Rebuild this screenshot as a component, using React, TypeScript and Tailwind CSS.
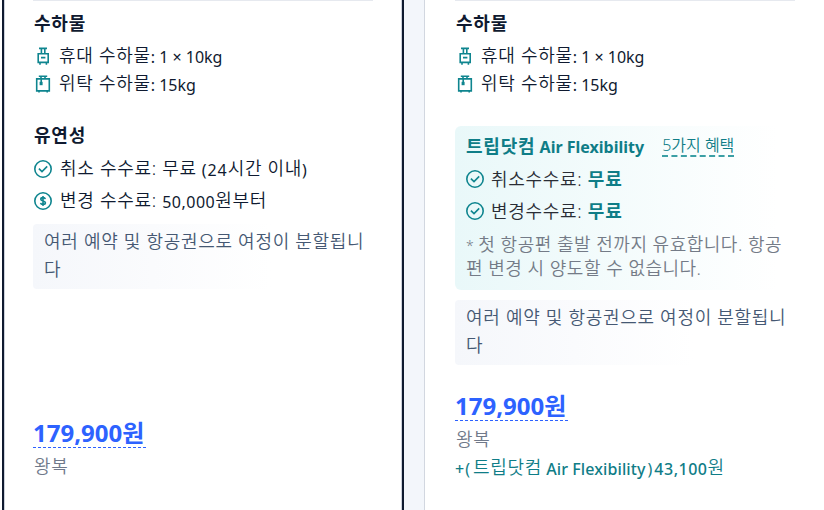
import type { ReactNode } from "react";

const K = ({ children }: { children: ReactNode }) => (
  <span className="text-[18px] font-[350] tracking-[0.7px]">{children}</span>
);

const KM = ({ children }: { children: ReactNode }) => (
  <span className="align-[1px] text-[18px] font-[350] tracking-[0.7px]">{children}</span>
);

const KB = ({ children }: { children: ReactNode }) => (
  <span className="text-[18px] font-bold tracking-[0.8px]">{children}</span>
);

function CarryOn() {
  return (
    <svg width="18" height="18" viewBox="0 0 18 18" fill="none" stroke="#0f858f" strokeWidth="1.6">
      <path d="M5 1.4h8M7.4 1v5.5M10.8 1v5.5M4.2 6.8h10v8.6h-10zM7 10.6h4.4M6 15.5v2.3M12.4 15.5v2.3" />
    </svg>
  );
}

function Checked() {
  return (
    <svg width="18" height="18" viewBox="0 0 18 18" fill="none" stroke="#0f858f" strokeWidth="1.6">
      <path d="M4.8 1.2h8.4M7 1v3M11 1v3M2.7 3.9h12.6v12H2.7zM5 16v1.6M13.2 16v1.6M7.2 4v4" />
      <path d="M5.6 6.8h3v3.4h-3z" fill="#0f858f" stroke="none" />
    </svg>
  );
}

function Check() {
  return (
    <svg width="18" height="18" viewBox="0 0 18 18" fill="none" stroke="#0f858f" strokeWidth="1.6">
      <circle cx="9" cy="9" r="8.2" />
      <path d="M4.9 8.6l3.1 3 5.2-5.2" />
    </svg>
  );
}

function Dollar() {
  return (
    <svg width="18" height="18" viewBox="0 0 18 18" fill="none" stroke="#0f858f" strokeWidth="1.6">
      <circle cx="9" cy="9" r="8.2" />
      <path d="M11.3 7.1C11.1 6.1 10.2 5.6 9 5.6c-1.3 0-2.2.6-2.2 1.6 0 2.3 4.6 1.2 4.6 3.6 0 1-.9 1.7-2.4 1.7-1.3 0-2.2-.6-2.4-1.6M9 4v10" />
    </svg>
  );
}

function Row({ icon, className, children }: { icon: ReactNode; className: string; children: ReactNode }) {
  return (
    <div className={`flex items-center whitespace-nowrap ${className}`}>
      {icon}
      <span>{children}</span>
    </div>
  );
}

function Baggage() {
  return (
    <>
      <div className="h-px bg-[#e6e9ef]" />
      <h3 className="mt-2 h-7 pl-px leading-7"><KB>수하물</KB></h3>
      <div className="mt-[5px] flex flex-col leading-7">
        <Row icon={<CarryOn />} className="h-7 gap-[7px] pl-px"><KM>휴대 수하물</KM>: 1 × 10kg</Row>
        <Row icon={<Checked />} className="h-7 gap-[7px] pl-px"><KM>위탁 수하물</KM>: 15kg</Row>
      </div>
    </>
  );
}

function SplitNotice() {
  return (
    <div className="h-[65px] rounded bg-linear-to-r from-[#f5f7fb] to-white to-70% pl-[11px] pt-1 leading-[27px] text-[#455873]">
      <K>여러 예약 및 항공권으로 여정이 분할됩니<br />다</K>
    </div>
  );
}

function Price() {
  return (
    <div className="flex h-[30px] w-[113px] items-center border-b border-dashed border-[#2d62ff] text-[24px] font-bold text-[#2d62ff]">
      179,900원
    </div>
  );
}

export default function App() {
  return (
    <div
      lang="ko"
      className="flex h-[510px] w-[824px] overflow-hidden bg-[#f3f6fb] font-['Noto_Sans','Noto_Sans_CJK_KR',sans-serif] text-[16px] text-[#0f1a30]"
    >
      <div className="w-[2px] bg-white" />
      <section className="w-[402px] border-x-2 border-[#0f1a30] bg-white">
        <div className="h-full border-x border-[#cdd2dc] px-7">
          <Baggage />
          <h3 className="mt-[23px] h-7 pl-px leading-7"><KB>유연성</KB></h3>
          <div className="mt-1 flex flex-col leading-8">
            <Row icon={<Check />} className="h-8 gap-2 pl-px"><KM>취소 수수료: 무료</KM> <span className="ml-px tracking-[0.9px]">(24</span><KM>시간 이내</KM>)</Row>
            <Row icon={<Dollar />} className="h-8 gap-2 pl-px"><KM>변경 수수료: </KM><span className="tracking-[0.5px]">50,000</span><KM>원부터</KM></Row>
          </div>
          <div className="mt-[7px]"><SplitNotice /></div>
          <div className="mt-[129px]"><Price /></div>
          <div className="mt-1 h-7 pl-px leading-7 text-[#70798a]"><K>왕복</K></div>
        </div>
      </section>
      <div className="w-5" />
      <section className="w-[400px] border-l border-[#d2d7e0] bg-white pl-[30px] pr-[29px]">
        <Baggage />
        <div className="mt-[28px] h-[164px] rounded-md bg-linear-to-r from-[#e9f8f9] to-white to-95% pl-[11px] pt-1">
          <div className="flex h-8 items-center gap-[18px] whitespace-nowrap text-[#0f7d87]">
            <span className="font-bold leading-8"><KB>트립닷컴</KB> Air Flexibility</span>
            <span className="h-[22px] border-b-2 border-dashed border-[#3c9fa5] text-[16px] font-[350] leading-5">5가지 혜택</span>
          </div>
          <div className="mt-px flex flex-col leading-8 text-[#292d35]">
            <Row icon={<Check />} className="h-8 gap-[7px]"><K>취소수수료: </K><span className="text-[#0f7d87]"><KB>무료</KB></span></Row>
            <Row icon={<Check />} className="h-8 gap-[7px]"><K>변경수수료: </K><span className="text-[#0f7d87]"><KB>무료</KB></span></Row>
          </div>
          <p className="mt-1.5 whitespace-nowrap text-[18px] font-[350] leading-[23px] tracking-[0.5px] text-[#747b87]">
            <span className="text-[14px]">* </span>첫 항공편 출발 전까지 유효합니다. 항공<br />편 변경 시 양도할 수 없습니다.
          </p>
        </div>
        <div className="mt-2.5"><SplitNotice /></div>
        <div className="mt-[26px]"><Price /></div>
        <div className="mt-1 h-7 pl-px leading-7 text-[#70798a]"><K>왕복</K></div>
        <div className="h-7 whitespace-nowrap leading-7 text-[#0f7d87]">
          <span className="font-medium">+</span><span className="ml-px mr-[3px]">(</span><KM>트립닷컴</KM> <span className="font-medium tracking-[0.1px]">Air Flexibility</span><span className="mx-[2px]">)</span><span className="font-medium tracking-[0.5px]">43,100</span><KM>원</KM>
        </div>
      </section>
    </div>
  );
}
